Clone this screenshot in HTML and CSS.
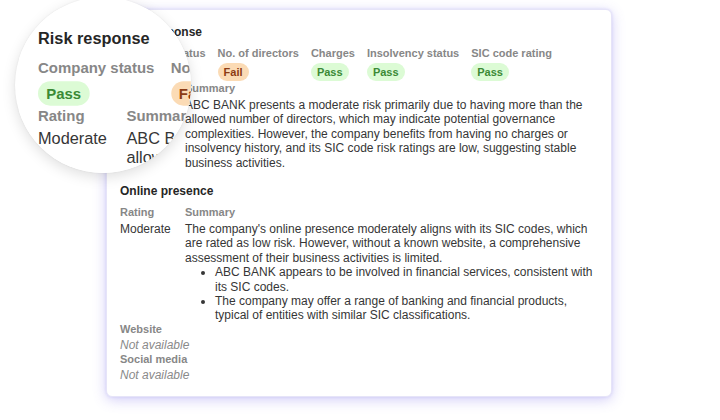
FILE: index.html
```html
<!DOCTYPE html>
<html lang="en">
<head>
<meta charset="utf-8">
<title>Risk response</title>
<link rel="stylesheet" href="styles.css">
</head>
<body>
<div class="page">
  <div class="card">
    <section class="sec">
      <h2 class="sec-title">Risk response</h2>
      <div class="checks">
        <div class="check"><span class="lbl">Company status</span><span class="badge pass">Pass</span></div>
        <div class="check"><span class="lbl">No. of directors</span><span class="badge fail">Fail</span></div>
        <div class="check"><span class="lbl">Charges</span><span class="badge pass">Pass</span></div>
        <div class="check"><span class="lbl">Insolvency status</span><span class="badge pass">Pass</span></div>
        <div class="check"><span class="lbl">SIC code rating</span><span class="badge pass">Pass</span></div>
      </div>
      <div class="rs">
        <span class="lbl">Rating</span>
        <span class="lbl">Summary</span>
        <span class="val">Moderate</span>
        <p class="val">ABC BANK presents a moderate risk primarily due to having more than the allowed number of directors, which may indicate potential governance complexities. However, the company benefits from having no charges or insolvency history, and its SIC code risk ratings are low, suggesting stable business activities.</p>
      </div>
    </section>
    <section class="sec sec-online">
      <h2 class="sec-title">Online presence</h2>
      <div class="rs">
        <span class="lbl">Rating</span>
        <span class="lbl">Summary</span>
        <span class="val">Moderate</span>
        <div class="val">
          <p>The company's online presence moderately aligns with its SIC codes, which are rated as low risk. However, without a known website, a comprehensive assessment of their business activities is limited.</p>
          <ul class="bullets">
            <li>ABC BANK appears to be involved in financial services, consistent with its SIC codes.</li>
            <li>The company may offer a range of banking and financial products, typical of entities with similar SIC classifications.</li>
          </ul>
        </div>
      </div>
      <div class="links">
        <span class="lbl">Website</span>
        <span class="na">Not available</span>
        <span class="lbl">Social media</span>
        <span class="na">Not available</span>
      </div>
    </section>
  </div>

  <div class="lens">
    <div class="lens-view">
      <div class="card card-copy">
        <section class="sec">
          <h2 class="sec-title">Risk response</h2>
          <div class="checks">
            <div class="check"><span class="lbl">Company status</span><span class="badge pass">Pass</span></div>
            <div class="check"><span class="lbl">No. of directors</span><span class="badge fail">Fail</span></div>
            <div class="check"><span class="lbl">Charges</span><span class="badge pass">Pass</span></div>
          </div>
          <div class="rs">
            <span class="lbl">Rating</span>
            <span class="lbl">Summary</span>
            <span class="val">Moderate</span>
            <p class="val">ABC BANK presents a moderate risk primarily due to having more than the allowed number of directors, which may indicate potential governance complexities.</p>
          </div>
        </section>
      </div>
    </div>
  </div>
</div>
</body>
</html>
```
FILE: styles.css
```css
* { box-sizing: border-box; }
html, body { margin: 0; padding: 0; background: #ffffff; }
body {
  font-family: "Liberation Sans", Arial, sans-serif;
  color: #363636;
  font-size: 12px;
}
.page {
  position: relative;
  width: 720px;
  height: 420px;
  overflow: hidden;
  padding: 9px 0 0 106px;
}
.card {
  width: 506px;
  height: 388px;
  background: #ffffff;
  border-radius: 6px;
  border: 1px solid #e6e4f8;
  box-shadow: 0 3px 13px rgba(108, 92, 232, 0.3), 0 0 3px rgba(108, 92, 232, 0.18);
  padding: 15px 14px 14px 13px;
}
.sec-title {
  margin: 0;
  font-size: 12px;
  line-height: 14px;
  font-weight: 700;
  color: #262626;
}
.lbl {
  display: block;
  font-size: 11px;
  line-height: 13px;
  font-weight: 700;
  color: #878787;
}
.checks {
  display: flex;
  gap: 12px;
  margin-top: 8px;
}
.check {
  display: flex;
  flex-direction: column;
  align-items: flex-start;
  gap: 3px;
}
.badge {
  display: inline-block;
  height: 18px;
  line-height: 18px;
  padding: 0 6px;
  border-radius: 9px;
  font-size: 11px;
  font-weight: 700;
}
.pass { background: #dcfbd5; color: #3b8a35; }
.fail { background: #fbdbb5; color: #8c3c14; }
.rs {
  display: grid;
  grid-template-columns: 65px 1fr;
  row-gap: 3px;
  margin-top: 1px;
}
.val {
  margin: 0;
  font-size: 12px;
  line-height: 14.4px;
  color: #363636;
}
.val p { margin: 0; }
.sec-online { margin-top: 14px; }
.sec-online .rs { margin-top: 8px; }
.bullets {
  margin: 0;
  padding-left: 30px;
}
.links {
  display: flex;
  flex-direction: column;
}
.na {
  display: block;
  margin-top: 2px;
  font-size: 12px;
  line-height: 15px;
  font-style: italic;
  color: #8a8a8a;
}
.lens {
  position: absolute;
  left: 15px;
  top: -3px;
  width: 176px;
  height: 176px;
  border-radius: 50%;
  overflow: hidden;
  background: #ffffff;
  box-shadow: 0 4px 14px rgba(0, 0, 0, 0.13), 0 0 2px rgba(0, 0, 0, 0.08);
}
.lens-view {
  position: absolute;
  left: -15px;
  top: 3px;
  width: 720px;
  height: 420px;
  padding: 9px 0 0 106px;
  transform-origin: 0 0;
  transform: translate(-125.2px, -4.5px) scale(1.36);
}
.card-copy {
  border-color: transparent;
  box-shadow: none;
}
```
